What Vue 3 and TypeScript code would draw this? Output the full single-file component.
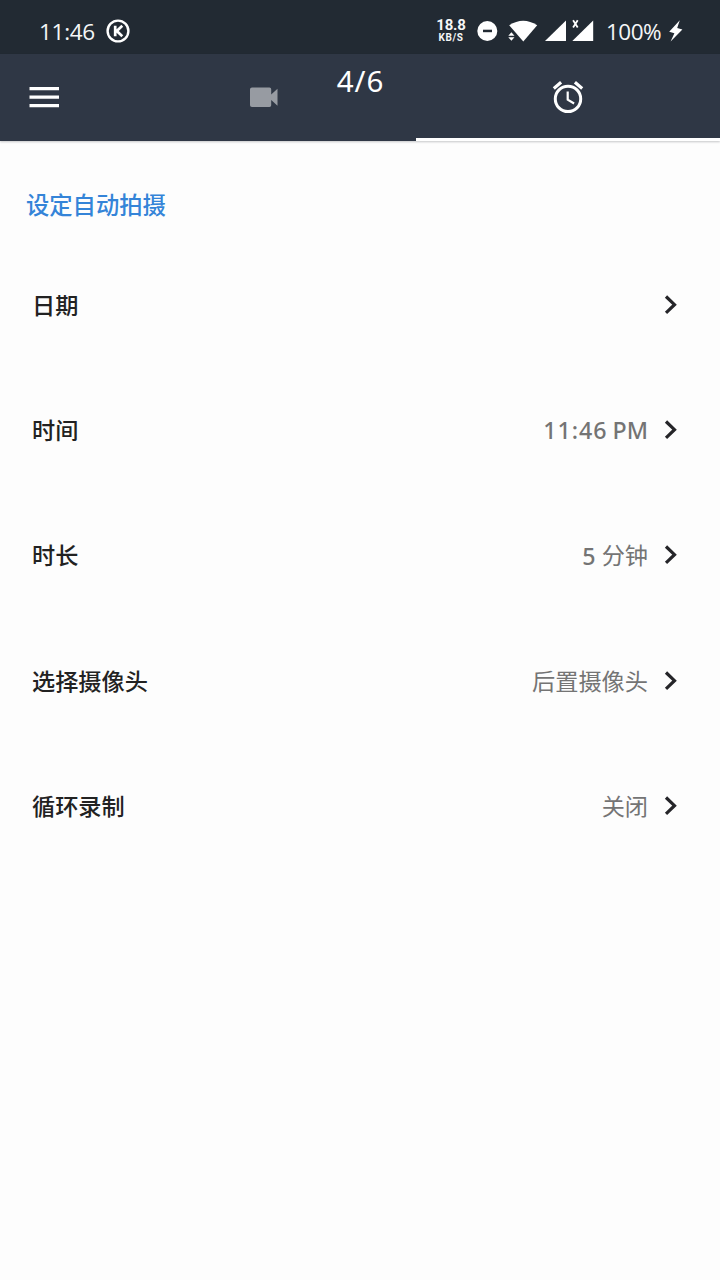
<script setup lang="ts">
interface Setting {
  label: string
  time?: string
  unit?: string
  value?: string
}

const settings: Setting[] = [
  { label: '日期' },
  { label: '时间', time: '11:46', unit: 'PM' },
  { label: '时长', time: '5', value: '分钟' },
  { label: '选择摄像头', value: '后置摄像头' },
  { label: '循环录制', value: '关闭' },
]
</script>

<template>
  <div class="screen">
    <header class="status">
      <span class="clock">11:46</span>
      <svg class="k-badge" width="26" height="26" viewBox="0 0 26 26" fill="none" stroke="#fff">
        <circle cx="13" cy="13" r="10.4" stroke-width="2.4" />
        <path d="M10.2 7.8v10.4M17.3 7.8L11.8 13l5.5 5.2" stroke-width="2.7" />
      </svg>
      <div class="spacer"></div>
      <div class="speed"><b>18.8</b><small>KB/S</small></div>
      <svg class="signals" width="120" height="24" viewBox="0 0 120 24" fill="#fff">
        <circle cx="12.3" cy="12" r="10" />
        <path d="M8 10.7h9v2.5H8z" fill="#222a33" />
        <path d="M34.2 6.3Q48.2-3 62.2 6.3L48.3 22.5z" />
        <path d="M33.3 16.8l3.1-3.6 3.1 3.6zM33.3 18.2l3.1 3.6 3.1-3.6z" stroke="#222a33" stroke-width="1.2" paint-order="stroke" />
        <path d="M91 1.5V22H70z" />
        <path d="M118.2 1.5V22H97.3z" />
        <path d="M98.1 1.2l4.6 7.2M102.7 1.2l-4.6 7.2" stroke="#fff" stroke-width="1.8" />
      </svg>
      <span class="battery">100%</span>
      <svg class="bolt" width="16" height="24" viewBox="0 0 16 24" fill="#fff">
        <path d="M11.8 1.3L1.2 12.8l5.2 1.5L2.6 22.6 14.4 10.4 9.2 8.9z" />
      </svg>
    </header>

    <nav class="toolbar">
      <button class="menu" aria-label="菜单">
        <svg width="30" height="22" viewBox="0 0 30 22" fill="#fff">
          <path d="M.5 0h29.8v3.2H.5zM.5 8.5h29.8v3.2H.5zM.5 17h29.8v3.2H.5z" />
        </svg>
      </button>
      <div class="tab">
        <svg width="30" height="22" viewBox="0 0 30 22" fill="#979ba2">
          <path d="M3 .5h17.5q1.7 0 1.7 1.7v5.3l6.3-5.8v17l-6.3-5.8v5.3q0 1.7-1.7 1.7H3q-2 0-2-1.7v-16Q1 .5 3 .5z" />
        </svg>
      </div>
      <div class="tab active">
        <svg width="32" height="34" viewBox="0 0 32 34" fill="none" stroke="#fff">
          <circle cx="16" cy="17.9" r="12.7" stroke-width="3" />
          <path d="M1.8 7.4L9.1 1.3M30.2 7.4L22.9 1.3" stroke-width="3.2" />
          <path d="M15.7 10.4v8.3l6.4 3.8" stroke-width="2.2" />
        </svg>
      </div>
      <span class="counter">4/6</span>
    </nav>

    <main>
      <h1>设定自动拍摄</h1>
      <div v-for="item in settings" :key="item.label" class="row">
        <span class="label">{{ item.label }}</span>
        <span class="value">
          <span v-if="item.time" class="latin time">{{ item.time }}</span>
          <span v-if="item.unit" class="latin">{{ item.unit }}</span>
          <span v-if="item.value">{{ item.value }}</span>
        </span>
        <svg width="16" height="22" viewBox="0 0 16 22" fill="none" stroke="#252529" stroke-width="3.2">
          <path d="M2 3.5l8.5 8.2L2 19.9" />
        </svg>
      </div>
    </main>
  </div>
</template>

<style>
body {
  margin: 0;
  background: #fdfdfd;
}
</style>

<style scoped>
.screen {
  width: 720px;
  height: 1280px;
  overflow: hidden;
  background: #fdfdfd;
  font-family: "Noto Sans", "Noto Sans CJK SC", sans-serif;
}
.status {
  height: 54px;
  box-sizing: border-box;
  padding: 8px 36px 0 39px;
  display: flex;
  align-items: center;
  background: #222a33;
  color: #f5f6f7;
}
.clock, .battery {
  font: 22.5px/30px "Open Sans", sans-serif;
  letter-spacing: -0.3px;
}
.clock {
  width: 66px;
  padding-top: 1px;
}
.spacer {
  flex: 1;
}
.speed {
  width: 32px;
  margin: -1px 8px 0 0;
  display: flex;
  flex-direction: column;
  align-items: center;
  font-family: Roboto, sans-serif;
}
.speed b {
  font-size: 15px;
  line-height: 14px;
  letter-spacing: -0.2px;
}
.speed small {
  font-size: 10px;
  font-weight: 700;
  line-height: 11px;
  letter-spacing: 0.6px;
}
.signals {
  margin-right: 11px;
}
.battery {
  width: 62px;
  padding-top: 1px;
  letter-spacing: -0.5px;
}
.toolbar {
  position: relative;
  height: 87px;
  display: flex;
  background: #2f3745;
  box-shadow: 0 1px 2px rgba(30, 35, 45, 0.25);
}
.menu {
  width: 112px;
  padding: 0 0 0 29px;
  border: 0;
  background: none;
  text-align: left;
  display: flex;
  align-items: center;
}
.tab {
  flex: 1;
  display: flex;
  align-items: center;
  justify-content: center;
}
.tab.active {
  box-shadow: inset 0 -3px #fff;
}
.counter {
  position: absolute;
  left: 1px;
  right: 0;
  top: 7px;
  text-align: center;
  color: #fff;
  font-size: 29.5px;
  line-height: 40px;
  letter-spacing: 1px;
}
main {
  padding: 46px 40px 0 32px;
}
h1 {
  margin: 0 0 18px -6px;
  font-size: 23.3px;
  line-height: 36px;
  font-weight: 500;
  color: #3484d8;
}
.row {
  height: 125.3px;
  display: flex;
  align-items: center;
}
.label {
  flex: 1;
  color: #222;
  font-size: 23.2px;
  font-weight: 500;
}
.value {
  display: flex;
  align-items: baseline;
  gap: 5px;
  margin-right: 16px;
  color: #747474;
  font-size: 23.2px;
}
.latin {
  font-weight: 500;
  transform: translateY(0.6px);
}
.time {
  letter-spacing: 1px;
}
</style>
